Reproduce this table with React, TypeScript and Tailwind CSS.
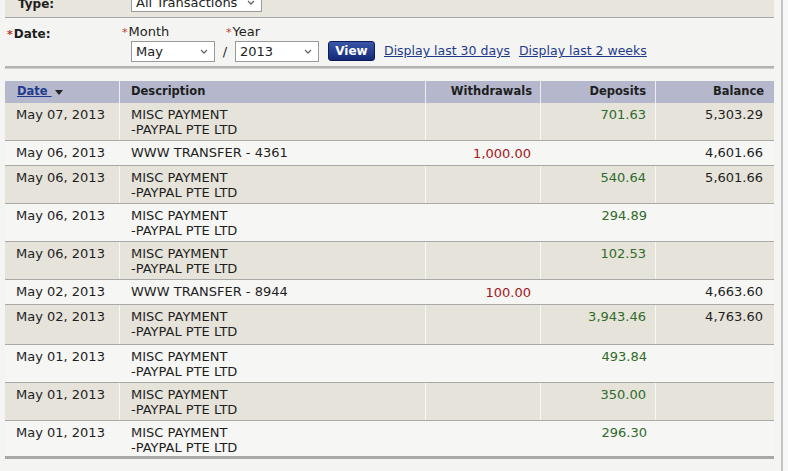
const rows = [
  { date: "May 07, 2013", desc: ["MISC PAYMENT", "-PAYPAL PTE LTD"], wd: "", dep: "701.63", bal: "5,303.29" },
  { date: "May 06, 2013", desc: ["WWW TRANSFER - 4361"], wd: "1,000.00", dep: "", bal: "4,601.66" },
  { date: "May 06, 2013", desc: ["MISC PAYMENT", "-PAYPAL PTE LTD"], wd: "", dep: "540.64", bal: "5,601.66" },
  { date: "May 06, 2013", desc: ["MISC PAYMENT", "-PAYPAL PTE LTD"], wd: "", dep: "294.89", bal: "" },
  { date: "May 06, 2013", desc: ["MISC PAYMENT", "-PAYPAL PTE LTD"], wd: "", dep: "102.53", bal: "" },
  { date: "May 02, 2013", desc: ["WWW TRANSFER - 8944"], wd: "100.00", dep: "", bal: "4,663.60" },
  { date: "May 02, 2013", desc: ["MISC PAYMENT", "-PAYPAL PTE LTD"], wd: "", dep: "3,943.46", bal: "4,763.60" },
  { date: "May 01, 2013", desc: ["MISC PAYMENT", "-PAYPAL PTE LTD"], wd: "", dep: "493.84", bal: "" },
  { date: "May 01, 2013", desc: ["MISC PAYMENT", "-PAYPAL PTE LTD"], wd: "", dep: "350.00", bal: "" },
  { date: "May 01, 2013", desc: ["MISC PAYMENT", "-PAYPAL PTE LTD"], wd: "", dep: "296.30", bal: "" },
];

const Caret = () => (
  <svg width="8" height="5" viewBox="0 0 8 5" className="ml-1">
    <path d="M1 1 L4 4 L7 1" fill="none" stroke="#666" strokeWidth="1.3" />
  </svg>
);

const Select = ({ value, className }: { value: string; className: string }) => (
  <div
    className={`flex items-center justify-between border border-[#9a9a9a] bg-white pl-[4px] pr-[6px] text-[13px] text-[#222] ${className}`}
  >
    <span>{value}</span>
    <Caret />
  </div>
);

const Star = () => <span className="text-[#c0392b] text-[11px] mr-[1px]">*</span>;

const App = () => {
  return (
    <div
      className="flex w-[788px] h-[471px] overflow-hidden bg-[#f4f4f2] text-[#1e1e1e]"
      style={{ fontFamily: '"DejaVu Sans", Verdana, sans-serif' }}
    >
      <div className="w-[781px] pl-[5px] pr-[7px]">
        {/* Type row */}
        <div className="h-[18px] overflow-hidden bg-[#e7e5dc] border-b border-[#a9a9a9]">
          <div className="flex -mt-[6px]">
            <div className="w-[126px] pl-[13px] text-[12px] font-bold pt-[1px]">Type:</div>
            <Select value="All Transactions" className="w-[131px] h-[19px] -mt-[1px]" />
          </div>
        </div>

        {/* Date row */}
        <div className="flex h-[47px]">
          <div className="w-[117px] pl-[2px] pt-[7px] text-[12px] font-bold">
            <Star />
            Date:
          </div>
          <div className="flex flex-col pt-[6px]">
            <div className="flex text-[13px] leading-[16px]">
              <div className="w-[104px]">
                <Star />
                Month
              </div>
              <div>
                <Star />
                Year
              </div>
            </div>
            <div className="flex items-center ml-[9px]">
              <Select value="May" className="w-[84px] h-[21px]" />
              <span className="w-[20px] text-center text-[13px]">/</span>
              <Select value="2013" className="w-[84px] h-[21px]" />
              <button className="ml-[9px] -mt-[2px] h-[20px] w-[47px] rounded-[3px] border border-[#0b1b55] bg-gradient-to-b from-[#3b56a8] to-[#13287a] text-[12px] font-bold text-white">
                View
              </button>
              <a className="ml-[9px] text-[12.5px] text-[#1f3a8c] underline">Display last 30 days</a>
              <a className="ml-[9px] text-[12.5px] text-[#1f3a8c] underline">Display last 2 weeks</a>
            </div>
          </div>
        </div>

        {/* separator */}
        <div className="h-[3px] mt-[1px] bg-[#b2b2b0] border-b border-[#d0d0cc]" />

        {/* table */}
        <div className="mt-[12px]">
          <div className="grid grid-cols-[115px_306px_115px_115px_118px] h-[22px] bg-[#b5b8cc] text-[11.5px] font-bold items-center">
            <div className="flex items-center pl-[12px] h-full border-r border-[#eeeef2]">
              <span className="text-[#1f3a8c] underline">Date&nbsp;</span>
              <svg width="8" height="5" viewBox="0 0 8 5" className="ml-[3px]">
                <path d="M0 0 H8 L4 5 Z" fill="#222" />
              </svg>
            </div>
            <div className="pl-[11px] h-full flex items-center border-r border-[#eeeef2]">Description</div>
            <div className="pr-[8px] h-full flex items-center justify-end border-r border-[#eeeef2]">Withdrawals</div>
            <div className="pr-[9px] h-full flex items-center justify-end border-r border-[#eeeef2]">Deposits</div>
            <div className="pr-[10px] h-full flex items-center justify-end">Balance</div>
          </div>
          {rows.map((r, i) => {
            const shaded = i % 2 === 0;
            const two = r.desc.length > 1;
            const sep = shaded ? "border-r border-[#f7f7f3]" : "";
            return (
              <div
                key={i}
                className={`grid grid-cols-[115px_306px_115px_115px_118px] text-[13px] leading-[15px] ${
                  two ? (i === 6 ? "h-[40px]" : "h-[38px]") : "h-[25px]"
                } ${shaded ? "bg-[#e6e3da]" : "bg-[#f6f6f4]"} ${
                  i === rows.length - 1 ? "border-b-[3px] border-[#a8a8a6]" : "border-b border-[#a9a9a7]"
                }`}
              >
                <div className={`pl-[11px] pt-[4px] ${sep}`}>{r.date}</div>
                <div className={`pl-[11px] pt-[4px] ${sep}`}>
                  {r.desc.map((d, j) => (
                    <div key={j}>{d}</div>
                  ))}
                </div>
                <div className={`pr-[10px] pt-[5px] text-right text-[#a3161b] ${sep}`}>{r.wd}</div>
                <div className={`pr-[9px] pt-[4px] text-right text-[#2f6b2a] ${sep}`}>{r.dep}</div>
                <div className="pr-[11px] pt-[4px] text-right">{r.bal}</div>
              </div>
            );
          })}
        </div>
      </div>
      <div className="w-[2px] h-full bg-[#c4c4c2]" />
      <div className="flex-1 bg-[#f8f8f8]" />
    </div>
  );
};

export default App;
